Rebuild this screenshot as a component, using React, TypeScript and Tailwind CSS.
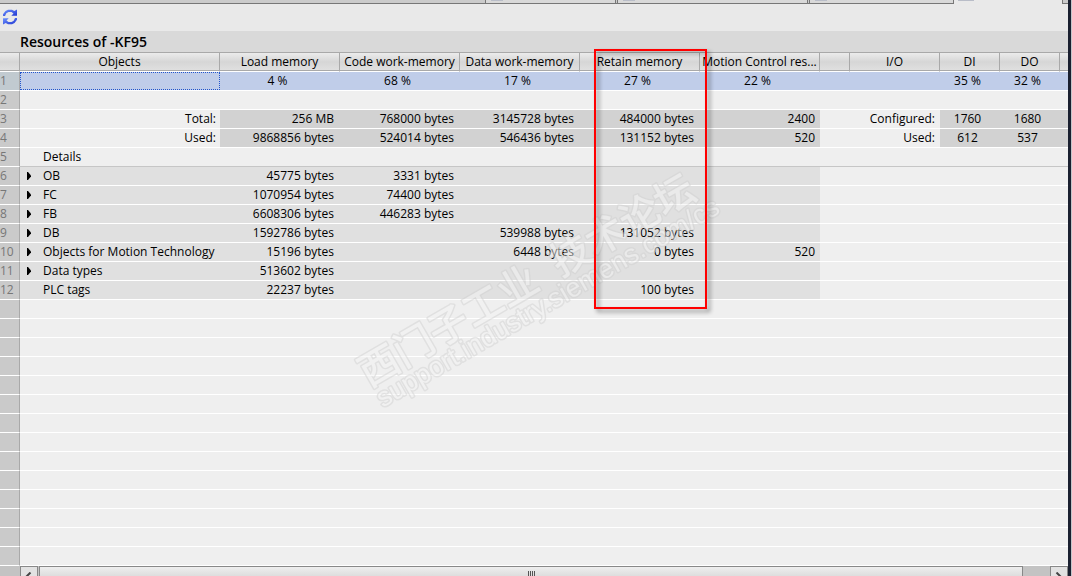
import clsx from "clsx";

type Row = {
  label?: string;
  kind: "percent" | "summary" | "plain" | "details" | "group" | "leaf";
  values?: string[];
  ioLabel?: string;
  io?: string[];
};

const columns = [
  "Objects",
  "Load memory",
  "Code work-memory",
  "Data work-memory",
  "Retain memory",
  "Motion Control res...",
  "",
  "I/O",
  "DI",
  "DO",
  "",
];

const rows: Row[] = [
  { kind: "percent", values: ["4 %", "68 %", "17 %", "27 %", "22 %"], io: ["35 %", "32 %"] },
  { kind: "plain" },
  {
    kind: "summary",
    label: "Total:",
    values: ["256 MB", "768000 bytes", "3145728 bytes", "484000 bytes", "2400"],
    ioLabel: "Configured:",
    io: ["1760", "1680"],
  },
  {
    kind: "summary",
    label: "Used:",
    values: ["9868856 bytes", "524014 bytes", "546436 bytes", "131152 bytes", "520"],
    ioLabel: "Used:",
    io: ["612", "537"],
  },
  { kind: "details", label: "Details" },
  { kind: "group", label: "OB", values: ["45775 bytes", "3331 bytes"] },
  { kind: "group", label: "FC", values: ["1070954 bytes", "74400 bytes"] },
  { kind: "group", label: "FB", values: ["6608306 bytes", "446283 bytes"] },
  { kind: "group", label: "DB", values: ["1592786 bytes", "", "539988 bytes", "131052 bytes"] },
  {
    kind: "group",
    label: "Objects for Motion Technology",
    values: ["15196 bytes", "", "6448 bytes", "0 bytes", "520"],
  },
  { kind: "group", label: "Data types", values: ["513602 bytes"] },
  { kind: "leaf", label: "PLC tags", values: ["22237 bytes", "", "", "100 bytes"] },
];

const EMPTY_ROWS = 14;

const EditorTab = ({ className }: { className: string }) => (
  <div className={clsx("h-full border-x border-b border-[#777777] bg-[#d9d9d9] pl-[5px]", className)}>
    <div className="h-px w-3 bg-[#b9bdc8]" />
  </div>
);

const TabStrip = () => (
  <div className="flex h-1 bg-[#cbcbcb]">
    <div className="flex-1 border-b border-[#777777]" />
    <EditorTab className="w-[131px]" />
    <div className="w-px border-b border-[#777777]" />
    <EditorTab className="w-[191px]" />
    <div className="w-px border-b border-[#777777]" />
    <EditorTab className="w-[145px]" />
    <div className="w-[108px] bg-[#e9e9e9] pl-1">
      <div className="h-px w-4 bg-[#b9bdc8]" />
    </div>
    <div className="w-[6px] border-b border-l border-[#777777]" />
  </div>
);

const RefreshIcon = () => (
  <svg className="size-4" viewBox="0 0 16 16">
    <defs>
      <linearGradient id="refresh" x1="0" y1="0" x2="1" y2="1">
        <stop offset="0" stopColor="#6f94ff" />
        <stop offset="1" stopColor="#1f35d0" />
      </linearGradient>
    </defs>
    <g fill="url(#refresh)">
      <path d="M1 7V5.200L3.500 2 6 .8h4L12.300 2 15 .6V6.800H9.300l2.200-2.300L9.500 3h-3L4.300 4.300 3 7z" />
      <path d="M15 9v1.800L12.500 14 10 15.200H6L3.700 14 1 15.400V9.200h5.700l-2.200 2.300L6.500 13h3l2.200-1.300L13 9z" />
    </g>
  </svg>
);

const GroupArrow = () => (
  <svg className="h-2 w-[5px]" viewBox="0 0 5 8">
    <path d="M0 0h1l3 3.500v1L1 8H0z" fill="#000" />
  </svg>
);

const ObjectCell = ({ row }: { row: Row }) => {
  if (row.kind === "percent") {
    return (
      <td className="border-b border-white p-0">
        <div className="h-[18px] border border-dotted border-[#2255cc]" />
      </td>
    );
  }
  if (row.kind === "summary") {
    return <td className="border-b border-white pr-1 text-right">{row.label}</td>;
  }
  return (
    <td
      className={clsx(
        "border-b pl-[7px]",
        row.kind === "details" ? "border-[#c6c6c6]" : "border-white",
        (row.kind === "group" || row.kind === "leaf") && "bg-[#e0e0e0]"
      )}
    >
      <div className="flex items-center">
        <div className="w-4">
          {row.kind === "group" && (
            <button type="button" aria-label={`Expand ${row.label}`} className="block">
              <GroupArrow />
            </button>
          )}
        </div>
        {row.label}
      </div>
    </td>
  );
};

const ResourceRow = ({ row, index }: { row: Row; index: number }) => {
  const line = row.kind === "details" ? "border-[#c6c6c6]" : "border-white";
  const percent = row.kind === "percent";
  const summary = row.kind === "summary";
  const shaded = row.kind === "group" || row.kind === "leaf";

  return (
    <tr className={clsx("h-[19px]", percent && "bg-[#c0cde9]")}>
      <th
        scope="row"
        className={clsx(
          "border-b border-r border-b-white border-r-[#a9a9a9] p-0 text-left font-normal text-[#777777]",
          percent ? "bg-[#c1cad0]" : "bg-[#cacaca]"
        )}
      >
        {index}
      </th>
      <ObjectCell row={row} />
      {[0, 1, 2, 3, 4].map((i) => (
        <td
          key={i}
          className={clsx(
            "border-b",
            line,
            percent ? "text-center" : "text-right",
            percent || i === 4 ? "pr-[5px]" : "pr-[6px]",
            summary && "bg-[#d2d2d2]",
            shaded && "bg-[#e0e0e0]"
          )}
        >
          {row.values?.[i]}
        </td>
      ))}
      <td className={clsx("border-b", line)} />
      <td className={clsx("border-b pr-[5px] text-right", line)}>{row.ioLabel}</td>
      {[0, 1].map((i) => (
        <td key={i} className={clsx("border-b pr-[5px] text-center", line, summary && "bg-[#d2d2d2]")}>
          {row.io?.[i]}
        </td>
      ))}
      <td className={clsx("border-b", line, summary && "bg-[#d2d2d2]")} />
    </tr>
  );
};

const headCell =
  "border-y border-[#a9a9a9] border-b-white p-0 font-normal shadow-[inset_0_-1px_0_#a9a9a9]";

const ResourceTable = () => (
  <table className="w-full table-fixed border-separate border-spacing-0 whitespace-nowrap text-[12px] leading-[18px] text-black">
    <colgroup>
      <col className="w-[20px]" />
      <col className="w-[200px]" />
      <col className="w-[120px]" />
      <col className="w-[120px]" />
      <col className="w-[120px]" />
      <col className="w-[120px]" />
      <col className="w-[120px]" />
      <col className="w-[30px]" />
      <col className="w-[90px]" />
      <col className="w-[60px]" />
      <col className="w-[60px]" />
      <col />
    </colgroup>
    <thead>
      <tr className="h-5 bg-linear-to-b from-[#eeeeee] via-[#d6d6d6] to-[#e2e2e2]">
        <th className={clsx(headCell, "border-r")} />
        {columns.map((name, i) => (
          <th key={i} scope="col" className={clsx(headCell, i < columns.length - 1 && "border-r")}>
            {name}
          </th>
        ))}
      </tr>
    </thead>
    <tbody>
      {rows.map((row, i) => (
        <ResourceRow key={i} row={row} index={i + 1} />
      ))}
      {Array.from({ length: EMPTY_ROWS }, (_, i) => (
        <tr key={i} className="h-[19px]">
          <td className="border-b border-r border-b-white border-r-[#a9a9a9] bg-[#cacaca] p-0" />
          <td colSpan={11} className="border-b border-white p-0" />
        </tr>
      ))}
    </tbody>
  </table>
);

const ScrollBar = () => (
  <div className="flex h-[10px] overflow-hidden bg-[#c3c3c3] pl-5">
    <button
      type="button"
      aria-label="Scroll left"
      className="h-[17px] w-[18px] border border-[#888888] bg-[#e2e2e2] pl-1 pt-[3px]"
    >
      <svg className="h-[9px] w-[7px]" viewBox="0 0 7 9">
        <path d="M5.500 .5L1.500 4.500l4 4" fill="none" stroke="#444" strokeWidth="2" />
      </svg>
    </button>
    <div className="ml-px flex h-[17px] flex-1 justify-center gap-px border border-[#888888] bg-linear-to-b from-[#eeeeee] to-[#d2d2d2] pt-1">
      <div className="h-2 w-px bg-[#555555]" />
      <div className="h-2 w-px bg-[#555555]" />
      <div className="h-2 w-px bg-[#555555]" />
      <div className="h-2 w-px bg-[#555555]" />
    </div>
    <button
      type="button"
      aria-label="Scroll right"
      className="ml-[27px] h-[17px] w-[18px] border border-[#888888] bg-[#e2e2e2] pl-1 pt-[3px]"
    >
      <svg className="h-[9px] w-[7px]" viewBox="0 0 7 9">
        <path d="M1.500 .5l4 4-4 4" fill="none" stroke="#444" strokeWidth="2" />
      </svg>
    </button>
  </div>
);

const Watermark = () => (
  <svg
    className="pointer-events-none absolute left-[320px] top-[140px] h-[300px] w-[440px] opacity-50"
    viewBox="0 0 440 300"
    fill="#f4f4f4"
    stroke="#d2d2d2"
    strokeWidth="3"
    strokeLinejoin="round"
    paintOrder="stroke"
  >
    <g transform="translate(49 248) rotate(-30)">
      <text x="0" y="0" fontSize="40" fontWeight="500" fontFamily="Noto Sans CJK SC, sans-serif">
        西门子工业
      </text>
      <text x="221" y="0" fontSize="40" fontWeight="500" fontFamily="Noto Sans CJK SC, sans-serif">
        技术论坛
      </text>
      <text x="2" y="24" fontSize="27" fontFamily="Liberation Sans, sans-serif">
        support.industry.siemens.com/cs
      </text>
    </g>
  </svg>
);

export default function App() {
  return (
    <div className="flex min-h-screen bg-[#efefef] font-['Open_Sans',sans-serif]">
      <main className="relative min-w-0 flex-1 overflow-hidden">
        <TabStrip />
        <div className="flex h-[27px] items-start bg-[#e9e9e9] pl-[2px] pt-[5px]">
          <button type="button" aria-label="Refresh">
            <RefreshIcon />
          </button>
        </div>
        <h1 className="h-[21px] bg-[#d9d9d9] pl-5 text-[14px] font-semibold leading-[21px] text-black">
          Resources of -KF95
        </h1>
        <ResourceTable />
        <ScrollBar />
        <Watermark />
        <div className="pointer-events-none absolute left-[594px] top-[49px] h-[260px] w-[113px] border-2 border-[#ff0000] drop-shadow-[3px_3px_2px_rgba(0,0,0,0.45)]" />
      </main>
      <div className="w-1 border-r border-[#c4c6ca] bg-[#1a2030]" />
    </div>
  );
}
